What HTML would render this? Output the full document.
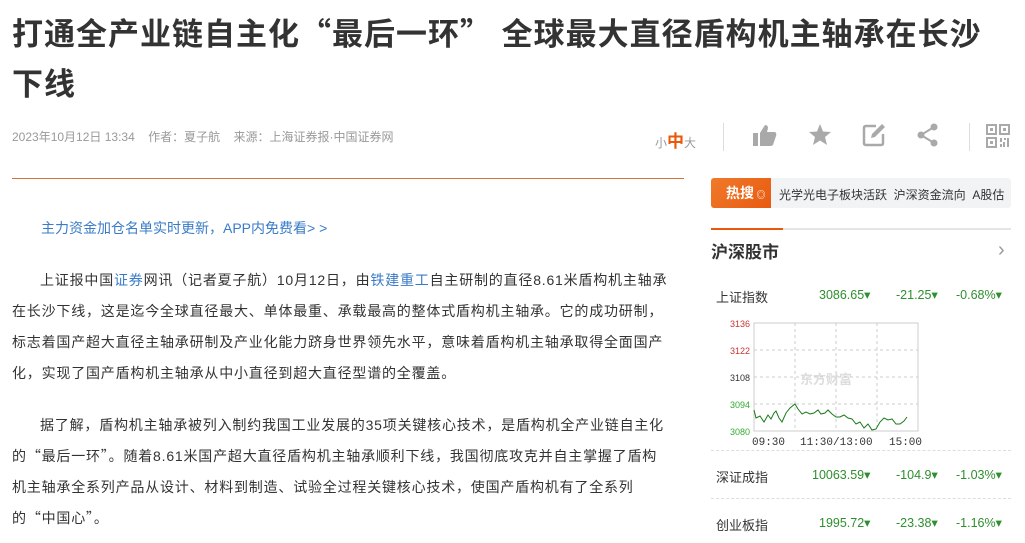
<!DOCTYPE html>
<html><head><meta charset="utf-8"><style>
*{margin:0;padding:0;box-sizing:border-box}
body{width:1025px;height:543px;overflow:hidden;background:#fff;font-family:"Liberation Sans","Noto Sans CJK SC",sans-serif;position:relative;color:#333}
.a{position:absolute;white-space:nowrap}
.q{font-family:"Noto Sans CJK SC",sans-serif}
h1{position:absolute;left:12px;top:7px;width:985px;font-size:31px;line-height:50px;font-weight:bold;color:#333;letter-spacing:1px}
.meta{left:12px;top:128px;font-size:12px;color:#999}
.hr{position:absolute;left:12px;top:178px;width:672px;height:1px;background:#d4733a}
.p{position:absolute;left:12px;width:700px;font-size:14px;line-height:31px;color:#333;letter-spacing:0.8px;white-space:nowrap}
.p div:first-child{padding-left:28px}
.p span{color:#3a7bc8}
.p .q{color:#333}
.ic{fill:#a9a9a9}
.row{position:absolute;left:716px;font-size:13px;color:#333}
.g{color:#2d8f2d;font-size:12.5px}
.dash{position:absolute;left:711px;width:300px;border-top:1px dashed #ddd}
</style></head><body>
<h1>打通全产业链自主化<span class="q">“</span>最后一环<span class="q">”</span> 全球最大直径盾构机主轴承在长沙下线</h1>
<div class="a meta">2023年10月12日 13:34&nbsp;&nbsp;&nbsp;&nbsp;作者<span class="q">：</span>夏子航&nbsp;&nbsp;&nbsp;&nbsp;来源<span class="q">：</span>上海证券报·中国证券网</div>
<div class="a" style="left:655px;top:127px;font-size:12px;color:#999">小<b style="color:#e8590c;font-size:17px">中</b>大</div>
<div class="a" style="left:723px;top:123px;width:1px;height:28px;background:#ddd"></div>
<div class="a" style="left:969px;top:123px;width:1px;height:28px;background:#ddd"></div>
<svg class="a" style="left:752px;top:124px" width="26" height="24" viewBox="0 0 26 24"><rect class="ic" x="1" y="9" width="5" height="13"/><path class="ic" d="M8 9 L13 1 Q16 1 16 4 L15 8 L23 8 Q25 9 24 12 L21 21 Q20 22 18 22 L8 22Z"/></svg>
<svg class="a" style="left:807px;top:123px" width="26" height="24" viewBox="0 0 24 24"><path class="ic" d="M12 1 L15 8.5 L23 9 L17 14 L19 22 L12 17.5 L5 22 L7 14 L1 9 L9 8.5Z"/></svg>
<svg class="a" style="left:862px;top:123px" width="24" height="24" viewBox="0 0 24 24"><path d="M14 3 H4 Q2 3 2 5 V20 Q2 22 4 22 H19 Q21 22 21 20 V11" fill="none" stroke="#a9a9a9" stroke-width="2.5"/><path class="ic" d="M20 1 L23 4 L13 14 L9 15 L10 11Z"/></svg>
<svg class="a" style="left:916px;top:123px" width="24" height="24" viewBox="0 0 24 24"><circle class="ic" cx="18" cy="4" r="3.5"/><circle class="ic" cx="5" cy="12" r="3.5"/><circle class="ic" cx="18" cy="20" r="3.5"/><path d="M18 4 L5 12 L18 20" stroke="#a9a9a9" stroke-width="2" fill="none"/></svg>
<svg class="a" style="left:986px;top:124px" width="24" height="24" viewBox="0 0 24 24"><g fill="none" stroke="#a9a9a9" stroke-width="2"><rect x="1" y="1" width="9" height="9"/><rect x="14" y="1" width="9" height="9"/><rect x="1" y="14" width="9" height="9"/></g><g class="ic"><rect x="4" y="4" width="3" height="3"/><rect x="17" y="4" width="3" height="3"/><rect x="4" y="17" width="3" height="3"/><rect x="14" y="14" width="2" height="4"/><rect x="18" y="14" width="2" height="2"/><rect x="21" y="14" width="2" height="9"/><rect x="17" y="18" width="2" height="5"/><rect x="14" y="20" width="2" height="3"/></g></svg>
<div class="hr"></div>
<div class="a" style="left:41px;top:218px;font-size:14px;color:#3a7bc8">主力资金加仓名单实时更新<span class="q">，</span>APP内免费看&gt; &gt;</div>
<div class="p" style="top:265px">
<div>上证报中国<span>证券</span>网讯<span class="q">（</span>记者夏子航<span class="q">）</span>10月12日，由<span>铁建重工</span>自主研制的直径8.61米盾构机主轴承</div>
<div>在长沙下线，这是迄今全球直径最大、单体最重、承载最高的整体式盾构机主轴承。它的成功研制，</div>
<div>标志着国产超大直径主轴承研制及产业化能力跻身世界领先水平，意味着盾构机主轴承取得全面国产</div>
<div>化，实现了国产盾构机主轴承从中小直径到超大直径型谱的全覆盖。</div>
</div>
<div class="p" style="top:410px">
<div>据了解，盾构机主轴承被列入制约我国工业发展的35项关键核心技术，是盾构机全产业链自主化</div>
<div>的<span class="q">“</span>最后一环<span class="q">”</span>。随着8.61米国产超大直径盾构机主轴承顺利下线，我国彻底攻克并自主掌握了盾构</div>
<div>机主轴承全系列产品从设计、材料到制造、试验全过程关键核心技术，使国产盾构机有了全系列</div>
<div>的<span class="q">“</span>中国心<span class="q">”</span>。</div>
</div>
<div class="a" style="left:711px;top:178px;width:300px;height:30px;background:#f2f3f5;border-radius:3px"></div>
<div class="a" style="left:711px;top:178px;width:60px;height:30px;background:linear-gradient(135deg,#f07a2a,#e85a10);border-radius:3px 0 0 3px;color:#fff;font-weight:bold;font-size:14px;line-height:30px;padding-left:15px">热搜<span style="font-size:9px;font-weight:normal"> ◎</span></div>
<div class="a" style="left:779px;top:186px;font-size:12px;color:#333;width:232px;overflow:hidden">光学光电子板块活跃&nbsp;&nbsp;沪深资金流向&nbsp;&nbsp;A股估</div>
<div class="a" style="left:711px;top:228px;width:300px;height:2px;background:#e5e5e5"></div>
<div class="a" style="left:711px;top:228px;width:72px;height:2px;background:#e8590c"></div>
<div class="a" style="left:711px;top:238px;font-size:17px;font-weight:bold;color:#333">沪深股市</div>
<div class="a" style="left:998px;top:239px;font-size:20px;color:#999">›</div>
<div class="row" style="top:287px;width:290px"><span class="a" style="left:0">上证指数</span><span class="a g" style="left:103px">3086.65▾</span><span class="a g" style="left:180px">-21.25▾</span><span class="a g" style="left:240px">-0.68%▾</span></div>
<svg class="a" style="left:720px;top:318px" width="205" height="130" viewBox="0 0 205 130">
<rect x="34" y="5" width="164" height="108" fill="none" stroke="#ccc"/>
<g stroke="#ccc" stroke-dasharray="3,3"><line x1="75" y1="5" x2="75" y2="113"/><line x1="116" y1="5" x2="116" y2="113"/><line x1="157" y1="5" x2="157" y2="113"/><line x1="34" y1="32" x2="198" y2="32"/><line x1="34" y1="59" x2="198" y2="59"/><line x1="34" y1="86" x2="198" y2="86"/></g>
<g font-size="9" font-family="Liberation Sans"><text x="10" y="9" fill="#c33">3136</text><text x="10" y="36" fill="#c33">3122</text><text x="10" y="63" fill="#333">3108</text><text x="10" y="90" fill="#3a3">3094</text><text x="10" y="117" fill="#3a3">3080</text></g>
<text x="80" y="66" font-size="13" fill="#ddd" font-weight="bold">东方财富</text>
<path d="M34 92 L36 100 L40 98 L44 104 L48 97 L51 101 L54 95 L56 93 L59 100 L62 104 L66 95 L70 90 L75 86 L78 91 L82 96 L86 94 L90 96 L94 95 L98 92 L101 96 L105 95 L108 92 L112 96 L116 99 L120 99 L124 97 L128 100 L132 101 L136 106 L140 104 L144 110 L148 106 L152 112 L156 111 L160 104 L164 100 L168 102 L172 101 L176 106 L180 106 L184 103 L187 99" fill="none" stroke="#1a7a1a" stroke-width="1"/>
<g font-size="11" font-family="Liberation Mono" fill="#333"><text x="32" y="127">09:30</text><text x="80" y="127">11:30/13:00</text><text x="169" y="127">15:00</text></g>
</svg>
<div class="dash" style="top:450px"></div>
<div class="row" style="top:467px;width:290px"><span class="a" style="left:0">深证成指</span><span class="a g" style="left:96px">10063.59▾</span><span class="a g" style="left:180px">-104.9▾</span><span class="a g" style="left:240px">-1.03%▾</span></div>
<div class="dash" style="top:498px"></div>
<div class="row" style="top:515px;width:290px"><span class="a" style="left:0">创业板指</span><span class="a g" style="left:103px">1995.72▾</span><span class="a g" style="left:180px">-23.38▾</span><span class="a g" style="left:240px">-1.16%▾</span></div>
</body></html>
